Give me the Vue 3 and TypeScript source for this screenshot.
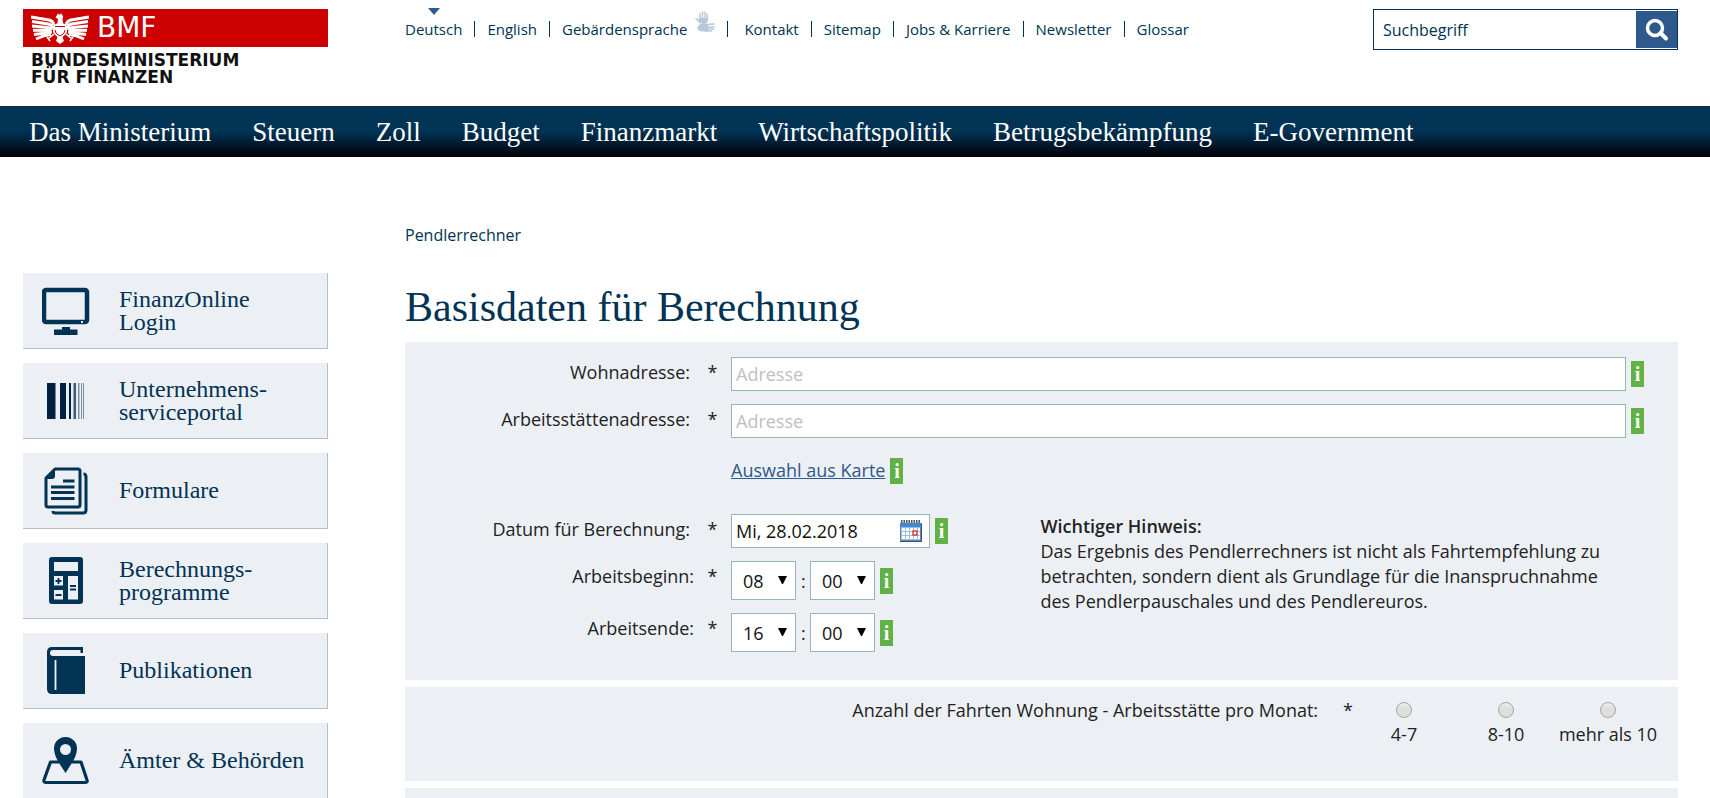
<script setup lang="ts">
import { ref } from 'vue'

interface LinkItem {
  label: string
  active?: boolean
  hands?: boolean
}

interface Tile {
  icon: string
  lines: string[]
}

const metaLinks: LinkItem[] = [
  { label: 'Deutsch', active: true },
  { label: 'English' },
  { label: 'Gebärdensprache', hands: true },
  { label: 'Kontakt' },
  { label: 'Sitemap' },
  { label: 'Jobs & Karriere' },
  { label: 'Newsletter' },
  { label: 'Glossar' },
]

const mainLinks: string[] = [
  'Das Ministerium',
  'Steuern',
  'Zoll',
  'Budget',
  'Finanzmarkt',
  'Wirtschaftspolitik',
  'Betrugsbekämpfung',
  'E-Government',
]

const tiles: Tile[] = [
  { icon: 'monitor', lines: ['FinanzOnline', 'Login'] },
  { icon: 'barcode', lines: ['Unternehmens-', 'serviceportal'] },
  { icon: 'forms', lines: ['Formulare'] },
  { icon: 'calculator', lines: ['Berechnungs-', 'programme'] },
  { icon: 'book', lines: ['Publikationen'] },
  { icon: 'map', lines: ['Ämter & Behörden'] },
]

const pad = (n: number): string => String(n).padStart(2, '0')
const hours: string[] = Array.from({ length: 24 }, (_, i) => pad(i))
const minutes: string[] = Array.from({ length: 12 }, (_, i) => pad(i * 5))

const home = ref('')
const work = ref('')
const date = ref('Mi, 28.02.2018')
const times = ref([
  { id: 'begin', label: 'Arbeitsbeginn:', hour: '08', minute: '00' },
  { id: 'end', label: 'Arbeitsende:', hour: '16', minute: '00' },
])
const trips = ref('')
const tripOptions: string[] = ['4-7', '8-10', 'mehr als 10']
</script>

<template>
  <div class="page">
    <header class="header">
      <a href="#" class="logo">
        <span class="logo-bar">
          <svg class="eagle" viewBox="0 0 58 32" aria-hidden="true">
            <g fill="none" stroke="#fff" stroke-width="2.900">
              <path d="M0 5 L18 8 Q22 9 23 13" />
              <path d="M1 9.500 L17 12 Q21 13 22 16" />
              <path d="M1 14 L16 15.500 Q20 16 21 18" />
              <path d="M2 18.300 L20 18.500" />
              <path d="M3 22.500 L15 21 L21 20" />
              <path d="M5 27 L14 23.500 L20 22.500" />
              <path d="M58 5 L40 8 Q36 9 35 13" />
              <path d="M57 9.500 L41 12 Q37 13 36 16" />
              <path d="M57 14 L42 15.500 Q38 16 37 18" />
              <path d="M56 18.300 L38 18.500" />
              <path d="M55 22.500 L43 21 L37 20" />
              <path d="M53 27 L44 23.500 L38 22.500" />
              <path d="M23 22 L17 27 M35 22 L41 27 M16 25 L19 29 M42 25 L39 29" stroke-width="1.600" />
            </g>
            <path
              fill="#fff"
              d="M27 1.500 L28.500 3 L30 1 L31 3 Q33 4 31.500 7 L32 11 L36 14 L36 20 Q34 24 31.500 25 L33 29 L29 32 L25 29 L26.500 25 Q24 24 22 20 L22 14 L26.500 11 L27 7 L24.500 5.500 Z"
            />
            <path d="M24 14.500 H34 M24 18 Q24 22 29 24 Q34 22 34 18" fill="none" stroke="#c00" stroke-width="1" />
          </svg>
          <span class="bmf">BMF</span>
        </span>
        <span class="logo-text">BUNDESMINISTERIUM<br />FÜR FINANZEN</span>
      </a>

      <div class="header-right">
        <nav class="meta" aria-label="Service">
          <a v-for="l in metaLinks" :key="l.label" href="#" :class="{ active: l.active, hands: l.hands }">
            {{ l.label }}
            <svg v-if="l.hands" class="hand-icon" viewBox="0 0 20 21" aria-hidden="true">
              <g fill="none" stroke="#b8c8da" stroke-linecap="round">
                <path stroke-width="1.500" d="M5 2.500 V8 M7.500 1 V8 M10 1 V8 M12.300 3 V9 M1 7.500 L4 10.500" />
                <path stroke-width="1.600" d="M12 13.500 L19 13 M12 16 H19.200 M12 18 H18.500 M11 20 H16.500 M8 13 L11.500 11" />
              </g>
              <path fill="#b8c8da" d="M4 7 H13 V10 L10 12.500 H5 L3 10 Z M5 13 H13 V20.500 H7 Q2 20 2.500 16 Z" />
            </svg>
          </a>
        </nav>
        <form class="search" role="search" @submit.prevent>
          <input type="text" placeholder="Suchbegriff" aria-label="Suchbegriff" />
          <button type="submit" aria-label="Suchen">
            <svg viewBox="0 0 24 24" aria-hidden="true">
              <circle cx="10" cy="10" r="7.500" fill="none" stroke="#fff" stroke-width="3.500" />
              <path d="M15.500 15 L21 20.500" stroke="#fff" stroke-width="4" stroke-linecap="round" />
            </svg>
          </button>
        </form>
      </div>
    </header>

    <nav class="main-nav" aria-label="Hauptnavigation">
      <a v-for="l in mainLinks" :key="l" href="#">{{ l }}</a>
    </nav>

    <div class="columns">
      <aside class="tiles">
        <a v-for="t in tiles" :key="t.icon" href="#" class="tile">
          <svg class="tile-icon" viewBox="0 0 48 48" aria-hidden="true">
            <template v-if="t.icon === 'monitor'">
              <rect x="2" y="3" width="43" height="32" rx="2" fill="none" stroke="#003354" stroke-width="4.500" />
              <path fill="#003354" d="M20 40 H28 V42.500 H35.500 V48 H12 V42.500 H20 Z" />
              <rect x="39" y="34" width="2" height="2" fill="#ecf0f5" />
            </template>
            <g v-else-if="t.icon === 'barcode'">
              <path fill="#00203f" d="M5 6 H13.500 V42 H5 Z M18 6 H24 V42 H18 Z M27 6 H29 V42 H27 Z" />
              <path fill="#3f5a72" d="M31.500 6 H34 V42 H31.500 Z" />
              <path fill="#7d90a2" d="M36 6 H37.500 V42 H36 Z M39 6 H40 V42 H39 Z M41 6 H42 V42 H41 Z" />
            </g>
            <g v-else-if="t.icon === 'forms'" fill="none" stroke="#003354">
              <path
                stroke-width="3"
                stroke-linejoin="round"
                d="M13 2 H36 Q38 2 38 4 V38 Q38 40 36 40 H6 Q4 40 4 38 V11 Z M41.500 7 Q44 7 44 10 V43 Q44 46 41 46 H13 Q11 46 11 44"
              />
              <path fill="#003354" stroke="none" d="M13 1 V9 Q13 12 10 12 H3 Z" />
              <path stroke-width="3" d="M21 14 H32.500 M9 20 H32.500 M9 25.500 H32.500 M9 31.500 H32.500" />
            </g>
            <g v-else-if="t.icon === 'calculator'">
              <rect x="7" y="0" width="34" height="47" rx="3" fill="#003354" />
              <path fill="#ecf0f5" d="M12 5 H36 V14 H12 Z M12 19 H21 V28.500 H12 Z M12 33 H21 V42.500 H12 Z M26 19 H36 V42.500 H26 Z" />
              <path
                fill="none"
                stroke="#003354"
                stroke-width="1.800"
                d="M13.500 24 H19.500 M16.500 21 V27 M13.500 38 H19.500 M28 29 H34 M28 32.500 H34"
              />
            </g>
            <g v-else-if="t.icon === 'book'">
              <path
                fill="#003354"
                d="M10 0 H41 V6 H38.500 V3 H11 Q8 3 8 6 Q8 9 11 9 H43 V47 H10 Q5 47 5 42 V5 Q5 0 10 0 Z"
              />
              <path d="M13.500 13 V43" stroke="#ecf0f5" stroke-width="1.800" />
            </g>
            <g v-else>
              <path
                fill="none"
                stroke="#003354"
                stroke-width="3.200"
                stroke-linejoin="round"
                d="M17 25 H8.500 L2 43 Q1.500 45.500 4 45.500 H43 Q46 45.500 45 43 L39 25 H30"
              />
              <path
                fill="#003354"
                fill-rule="evenodd"
                d="M23.500 0 A11.500 11.500 0 0 1 35 11.500 Q35 19 28 29 L23.500 36 L19 29 Q12 19 12 11.500 A11.500 11.500 0 0 1 23.500 0 Z M23.500 7 A5.500 5.500 0 1 0 23.500 18 A5.500 5.500 0 1 0 23.500 7 Z"
              />
            </g>
          </svg>
          <span class="tile-text">
            <span v-for="line in t.lines" :key="line">{{ line }}</span>
          </span>
        </a>
      </aside>

      <main class="content">
        <p class="crumb">Pendlerrechner</p>
        <h1>Basisdaten für Berechnung</h1>

        <form @submit.prevent>
          <section class="panel basics">
            <div class="row">
              <label for="home">Wohnadresse:</label>
              <span class="star">*</span>
              <div class="field">
                <input id="home" v-model="home" class="box grow" type="text" placeholder="Adresse" />
                <button type="button" class="info" aria-label="Hilfe">i</button>
              </div>
            </div>
            <div class="row">
              <label for="work">Arbeitsstättenadresse:</label>
              <span class="star">*</span>
              <div class="field">
                <input id="work" v-model="work" class="box grow" type="text" placeholder="Adresse" />
                <button type="button" class="info" aria-label="Hilfe">i</button>
              </div>
            </div>
            <div class="row map-row">
              <div class="field">
                <a href="#">Auswahl aus Karte</a>
                <button type="button" class="info" aria-label="Hilfe">i</button>
              </div>
            </div>
            <div class="split">
              <div class="rows">
                <div class="row">
                  <label for="date">Datum für Berechnung:</label>
                  <span class="star">*</span>
                  <div class="field">
                    <div class="box date">
                      <input id="date" v-model="date" type="text" />
                      <button type="button" aria-label="Kalender">
                        <svg viewBox="0 0 22 22" aria-hidden="true">
                          <rect x="0" y="3" width="22" height="19" fill="#5f86b0" />
                          <rect x="0" y="3" width="22" height="4" fill="#3f8ad8" />
                          <rect x="1" y="7" width="19" height="13" fill="#9dbfdd" />
                          <path
                            d="M1 1.500 H21"
                            stroke="#555"
                            stroke-width="3"
                            stroke-dasharray="1.500 1"
                          />
                          <path
                            fill="#fff"
                            d="M2 8h3v3H2z M6 8h3v3H6z M10 8h3v3h-3z M14 8h3v3h-3z M2 12h3v3H2z M6 12h3v3H6z M10 12h3v3h-3z M2 16h3v3H2z M6 16h3v3H6z M10 16h3v3h-3z M14 16h3v3h-3z M18 8h2v3h-2z M18 12h2v3h-2z M18 16h2v3h-2z"
                          />
                          <rect x="13" y="11" width="4" height="4" fill="#fff" stroke="#e23b3b" stroke-width="1.500" />
                          <path d="M0 21.500 H22 M21.500 4 V22" stroke="#33557a" stroke-width="1" />
                        </svg>
                      </button>
                    </div>
                    <button type="button" class="info" aria-label="Hilfe">i</button>
                  </div>
                </div>
                <div v-for="t in times" :key="t.id" class="row time-row">
                  <label :for="t.id">{{ t.label }}</label>
                  <span class="star">*</span>
                  <div class="field">
                    <span class="pick">
                      <select :id="t.id" v-model="t.hour" class="box">
                        <option v-for="h in hours" :key="h">{{ h }}</option>
                      </select>
                      <svg viewBox="0 0 10 8" aria-hidden="true"><path d="M0 0 H9 L5 8 H4 Z" /></svg>
                    </span>
                    <span class="colon">:</span>
                    <span class="pick">
                      <select v-model="t.minute" class="box" :aria-label="t.label + ' Minuten'">
                        <option v-for="m in minutes" :key="m">{{ m }}</option>
                      </select>
                      <svg viewBox="0 0 10 8" aria-hidden="true"><path d="M0 0 H9 L5 8 H4 Z" /></svg>
                    </span>
                    <button type="button" class="info" aria-label="Hilfe">i</button>
                  </div>
                </div>
              </div>
              <p class="hint">
                <strong>Wichtiger Hinweis:</strong><br />
                Das Ergebnis des Pendlerrechners ist nicht als Fahrtempfehlung zu betrachten, sondern dient als
                Grundlage für die Inanspruchnahme des Pendlerpauschales und des Pendlereuros.
              </p>
            </div>
          </section>

          <section class="panel trips" role="radiogroup" aria-labelledby="trips-label">
            <span id="trips-label">Anzahl der Fahrten Wohnung - Arbeitsstätte pro Monat:</span>
            <span class="trip-star">*</span>
            <label v-for="o in tripOptions" :key="o">
              <input v-model="trips" type="radio" name="trips" :value="o" />
              {{ o }}
            </label>
          </section>

          <section class="panel next"></section>
        </form>
      </main>
    </div>
  </div>
</template>

<style>
body {
  margin: 0;
  background: #fff;
}
</style>

<style scoped>
.page {
  font-family: 'Open Sans', 'Noto Sans', sans-serif;
  font-size: 18px;
  line-height: 24px;
  color: #222;
}
.page *,
.page *::before {
  box-sizing: border-box;
}
a {
  color: #003354;
  text-decoration: none;
}
input,
select,
button {
  font: inherit;
  margin: 0;
}
button {
  border: 0;
  padding: 0;
  cursor: pointer;
}
svg {
  display: block;
}

.header,
.columns {
  display: grid;
  grid-template-columns: 305px minmax(0, 1fr);
  column-gap: 77px;
  padding: 0 32px 0 23px;
}
.header {
  height: 106px;
  padding-top: 9px;
}
.logo-bar {
  display: flex;
  align-items: center;
  height: 38px;
  padding-left: 8px;
  background: #c00;
}
.eagle {
  width: 58px;
  height: 32px;
}
.bmf {
  margin-left: 8px;
  font: 28px/38px 'DejaVu Sans', sans-serif;
  color: #fff;
}
.logo-text {
  display: block;
  padding: 5px 0 0 8px;
  font: bold 17px/17px 'DejaVu Sans', sans-serif;
  color: #111;
}
.header-right {
  display: flex;
  justify-content: space-between;
  align-items: flex-start;
}
.meta {
  display: flex;
  padding-top: 12px;
  font-size: 15px;
  line-height: 16px;
}
.meta a {
  position: relative;
  white-space: nowrap;
}
.meta a + a {
  margin-left: 12px;
  padding-left: 12px;
  border-left: 1px solid #003354;
}
.meta .active::before {
  content: '';
  position: absolute;
  top: -13px;
  left: 50%;
  margin-left: -6px;
  border: 6px solid transparent;
  border-top: 7px solid #2d598c;
  border-bottom: 0;
}
.meta .hands {
  padding-right: 28px;
}
.meta .hands + a {
  padding-left: 16px;
}
.hand-icon {
  position: absolute;
  right: 0;
  top: -10px;
  width: 20px;
  height: 21px;
}
.search {
  display: flex;
  width: 305px;
  height: 41px;
  border: 1px solid #003354;
  padding: 1px 0;
}
.search input {
  flex: 1;
  min-width: 0;
  border: 0;
  padding: 0 9px;
  font-size: 16px;
  background: none;
  outline: none;
}
.search input::placeholder {
  color: #003354;
  opacity: 1;
}
.search button {
  display: grid;
  place-items: center;
  width: 41px;
  background: #2d598c;
}
.search svg {
  width: 24px;
  height: 24px;
}

.main-nav {
  display: flex;
  align-items: center;
  gap: 41px;
  height: 51px;
  padding: 0 29px;
  background: linear-gradient(#003354 0, #003354 50%, #000008 100%);
  font: 27px/32px 'Liberation Serif', serif;
}
.main-nav a {
  color: #fff;
  white-space: nowrap;
}

.tiles {
  display: flex;
  flex-direction: column;
  gap: 14px;
  padding-top: 116px;
}
.tile {
  display: flex;
  align-items: center;
  height: 76px;
  padding-left: 19px;
  background: #ecf0f5;
  border: solid #b0bfd2;
  border-width: 0 1px 1px 0;
  font: 24px/23px 'Liberation Serif', serif;
}
.tile-icon {
  width: 48px;
  height: 48px;
}
.tile-text {
  display: flex;
  flex-direction: column;
  padding-left: 29px;
}

.crumb {
  margin: 66px 0 0;
  font-size: 16px;
  color: #003354;
}
h1 {
  margin: 36px 0 11px;
  font: 42px/48px 'Liberation Serif', serif;
  color: #003354;
}
.panel {
  background: #ecf0f5;
  margin-bottom: 7px;
}
.basics {
  padding: 15px 34px 28px 0;
}
.row {
  display: grid;
  grid-template-columns: 285px 41px minmax(0, 1fr);
  margin-bottom: 13px;
}
.row label {
  padding-top: 3px;
  text-align: right;
}
.star {
  padding: 3px 0 0 4px;
  text-align: center;
}
.field {
  grid-column: 3;
  display: flex;
  align-items: center;
  gap: 5px;
}
.box {
  height: 34px;
  border: 1px solid #93b8b3;
  border-radius: 0;
  background: #fff;
  color: #111;
  padding: 0 4px;
}
.grow {
  flex: 1;
  min-width: 0;
}
.grow::placeholder {
  color: #c0c0c0;
  opacity: 1;
}
.info {
  width: 13px;
  height: 26px;
  background: #61b146;
  color: #fff;
  font: bold 20px/26px 'Liberation Serif', serif;
  text-align: center;
}
.map-row {
  margin: 20px 0 30px;
}
.map-row .field {
  align-items: flex-start;
}
.map-row a {
  color: #2d598c;
  text-decoration: underline;
}
.split {
  display: flex;
  gap: 16px;
}
.rows {
  width: 50%;
  flex: none;
}
.rows .row:last-child {
  margin-bottom: 0;
}
.date {
  display: flex;
  align-items: center;
  justify-content: space-between;
  width: 199px;
  padding-right: 7px;
}
.date input {
  width: 140px;
  border: 0;
  padding: 0;
  background: none;
  color: #111;
}
.date button {
  background: none;
}
.date svg {
  width: 22px;
  height: 22px;
}
.time-row label {
  margin-right: -4px;
}
.pick {
  position: relative;
}
.pick select {
  display: block;
  appearance: none;
  width: 65px;
  height: 39px;
  padding-left: 11px;
}
.pick svg {
  position: absolute;
  right: 8px;
  top: 15px;
  width: 10px;
  height: 8px;
  pointer-events: none;
}
.colon {
  width: 4px;
  text-align: center;
}
.hint {
  margin: 0;
  max-width: 570px;
  line-height: 25px;
}
.hint strong {
  font-weight: 600;
}

.trips {
  display: flex;
  align-items: flex-start;
  justify-content: flex-end;
  min-height: 94px;
  padding: 11px 19px 0;
}
.trip-star {
  padding: 0 0 0 25px;
}
.trips label {
  display: flex;
  flex-direction: column;
  align-items: center;
  width: 102px;
  white-space: nowrap;
}
.trips input {
  appearance: none;
  width: 16px;
  height: 16px;
  margin: 4px 0;
  border: 1px solid #a5a5a5;
  border-radius: 50%;
  background: linear-gradient(#eee, #dededa 40%);
}
.trips input:checked {
  background: radial-gradient(#333 30%, #dededa 35%);
}
.next {
  height: 10px;
  margin-bottom: 0;
}
</style>
